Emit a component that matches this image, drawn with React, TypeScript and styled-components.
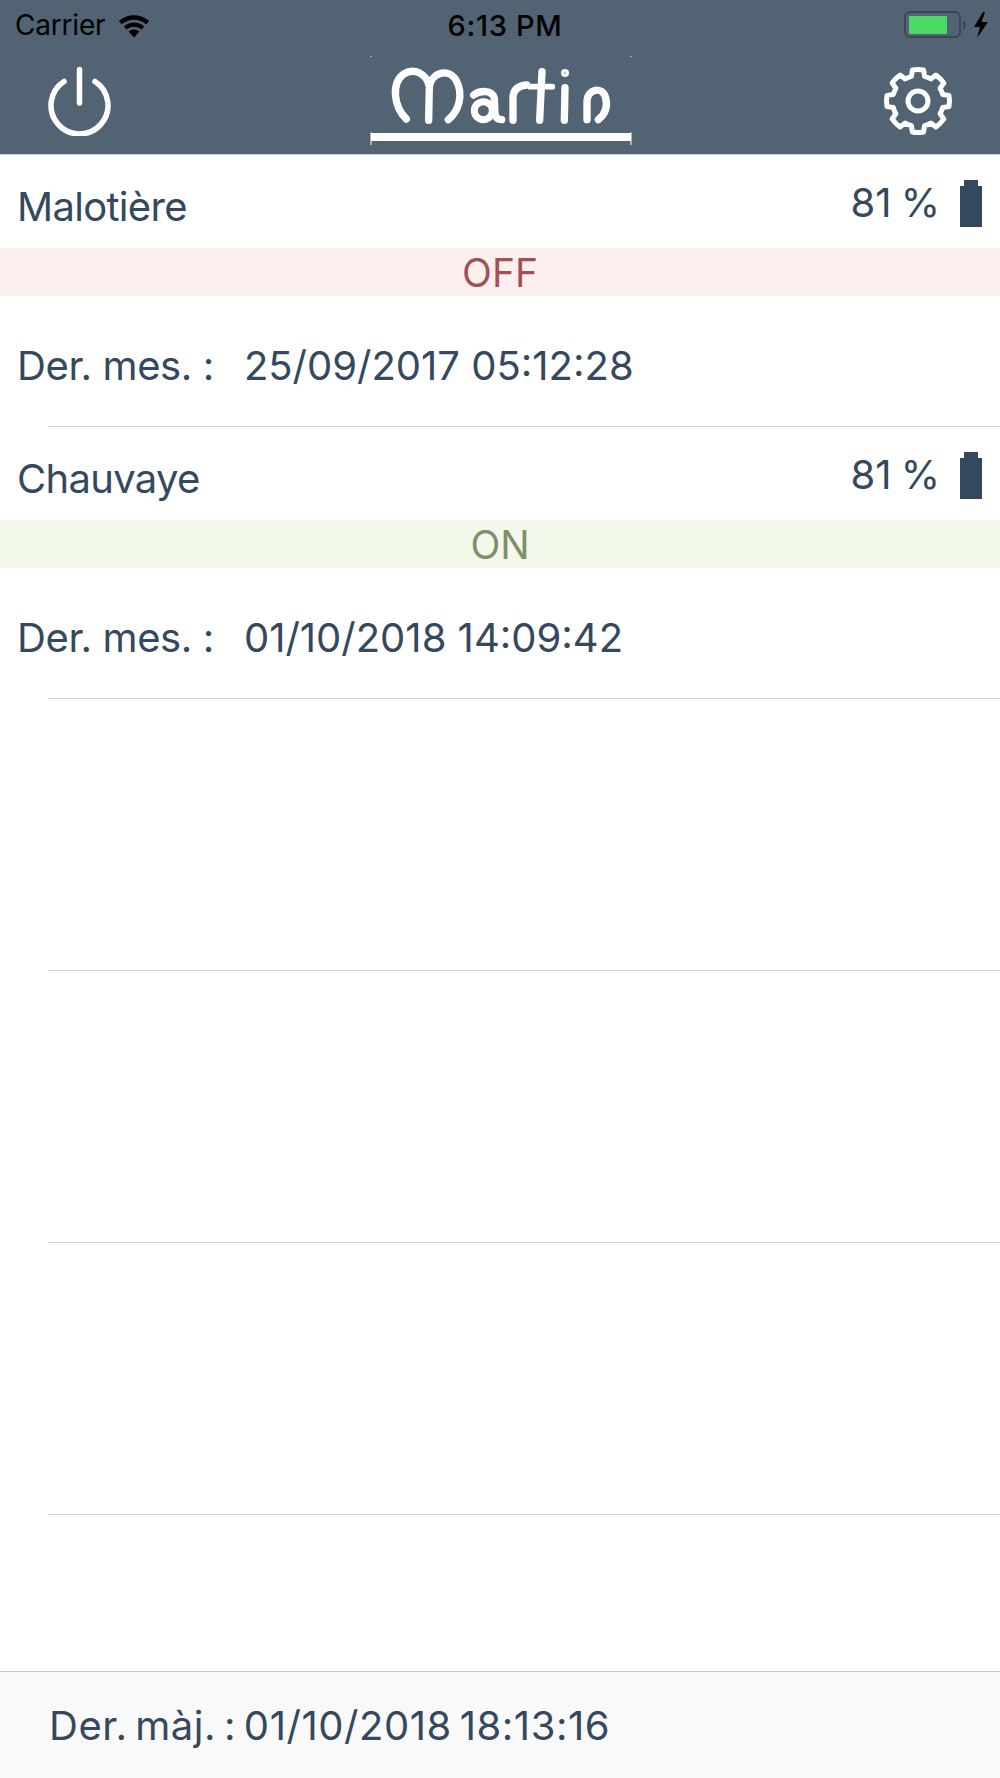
import React from "react";
import styled, { createGlobalStyle } from "styled-components";

const Global = createGlobalStyle`
  html, body { margin: 0; padding: 0; background: #fff; }
  * { box-sizing: border-box; }
  body { font-family: Inter, "Liberation Sans", sans-serif; }
`;

const Page = styled.div`
  width: 1000px;
  height: 1778px;
  display: flex;
  flex-direction: column;
  background: #fff;
  overflow: hidden;
  color: #34495e;
`;

const Header = styled.header`
  background: #526373;
  border-bottom: 1px solid #c9d0d6;
  height: 155px;
  display: flex;
  flex-direction: column;
`;

const StatusBar = styled.div`
  height: 48px;
  padding: 2px 11px 0 15px;
  display: grid;
  grid-template-columns: 1fr auto 1fr;
  align-items: center;
  color: #000;
  font-size: 28px;
`;

const StatusLeft = styled.div`
  display: flex;
  align-items: center;
  gap: 12px;
  letter-spacing: -0.2px;
`;

const StatusTime = styled.div`
  font-weight: 500;
  font-size: 29px;
  letter-spacing: 0.7px;
  margin-left: 6px;
`;

const StatusRight = styled.div`
  display: flex;
  justify-content: flex-end;
  align-items: center;
`;

const NavBar = styled.nav`
  flex: 1;
  display: grid;
  grid-template-columns: 1fr auto 1fr;
  align-items: center;
  padding: 0 46px 0 48px;
`;

const NavLeft = styled.div`
  display: flex;
  justify-content: flex-start;
`;

const NavRight = styled.div`
  display: flex;
  justify-content: flex-end;
`;

const List = styled.main`
  flex: 1;
  display: flex;
  flex-direction: column;
`;

const Row = styled.section`
  height: 272px;
  position: relative;
  display: flex;
  flex-direction: column;
  flex: none;
  &::after {
    content: "";
    position: absolute;
    left: 48px;
    right: 0;
    bottom: 0;
    height: 1px;
    background: #d6d6da;
  }
`;

const TitleLine = styled.div`
  height: 93px;
  padding: 10px 18px 0 17px;
  display: flex;
  justify-content: space-between;
  align-items: center;
  font-size: 40px;
`;

const Name = styled.span`
  letter-spacing: -0.7px;
`;

const BatteryWrap = styled.div`
  display: flex;
  align-items: center;
  gap: 20px;
  margin-top: -6px;
`;

const Pct = styled.span`
  position: relative;
  top: -1px;
  word-spacing: -2px;
`;

const Band = styled.div<{ $on: boolean }>`
  height: 48px;
  display: flex;
  justify-content: center;
  align-items: center;
  font-size: 39px;
  background: ${(p) => (p.$on ? "#f2f9eb" : "#feefef")};
  color: ${(p) => (p.$on ? "#7f8f6a" : "#a0525a")};
`;

const MeasureLine = styled.div`
  flex: 1;
  padding: 8px 17px 0;
  display: flex;
  align-items: center;
  gap: 30px;
  font-size: 40px;
`;

const Label = styled.span`
  letter-spacing: -0.4px;
`;

const DateText = styled.span`
  letter-spacing: 0;
`;

const Footer = styled.footer`
  height: 107px;
  flex: none;
  background: #f9f9f9;
  border-top: 1px solid #c8c8c8;
  padding: 0 0 0 49px;
  display: flex;
  align-items: center;
  font-size: 40px;
  letter-spacing: 0.55px;
  word-spacing: -4px;
`;

const Gear = () => {
  const pts: string[] = [];
  const n = 8;
  const cx = 36, cy = 36, ro = 31.5, ri = 25.5;
  for (let i = 0; i < n; i++) {
    const a = (i * 2 * Math.PI) / n - Math.PI / 2;
    const w = 0.2;
    const pol = (r: number, t: number) =>
      `${(cx + r * Math.cos(t)).toFixed(2)} ${(cy + r * Math.sin(t)).toFixed(2)}`;
    pts.push(`${i === 0 ? "M" : "L"}${pol(ri, a - w - 0.06)}`);
    pts.push(`L${pol(ro, a - w + 0.02)}`);
    pts.push(`A${ro} ${ro} 0 0 1 ${pol(ro, a + w - 0.02)}`);
    pts.push(`L${pol(ri, a + w + 0.06)}`);
    const next = a + (2 * Math.PI) / n;
    pts.push(`A${ri} ${ri} 0 0 1 ${pol(ri, next - w - 0.06)}`);
  }
  return (
    <svg width="72" height="72" viewBox="0 0 72 72" fill="none" stroke="#fff" strokeWidth="5" strokeLinejoin="round">
      <path d={pts.join(" ") + "Z"} />
      <circle cx={cx} cy={cy} r="10" />
    </svg>
  );
};

const Power = () => (
  <svg width="64" height="70" viewBox="0 0 64 70" fill="none" stroke="#fff" strokeWidth="5.5" strokeLinecap="round">
    <path d="M31.5 3.5V37" />
    <path d="M16 15.5A28.5 28.5 0 1 0 47 15.5" />
  </svg>
);

const Logo = () => (
  <svg width="280" height="100" viewBox="0 18 840 300" fill="none" stroke="#fff" strokeWidth="22" strokeLinecap="round" strokeLinejoin="round" role="img" aria-label="Martin">
    <path d="M136 222C98 185 90 115 128 87C160 68 197 85 205 125L203 226M205 125C212 82 262 68 285 105C310 150 292 200 262 224" />
    <path d="M338 150C355 136 394 133 400 160L402 205C404 218 410 224 422 224" />
    <circle cx="367" cy="197" r="27" strokeWidth="21" />
    <path d="M456 226L456 155C458 132 475 122 497 120" />
    <path d="M543 80L536 226" />
    <path d="M507 125H574" strokeWidth="17" />
    <path d="M612 128L610 226" />
    <circle cx="612" cy="84" r="5" strokeWidth="14" />
    <path d="M678 224L678 170C680 130 722 124 733 155C742 185 732 208 712 224" />
    <path d="M30 276H810" strokeWidth="24" strokeLinecap="butt" />
    <path d="M30 262V300M810 262V300" strokeWidth="3" strokeLinecap="butt" />
    <path d="M30 34v1M810 34v1" strokeWidth="4" stroke="#c9d0d6" />
  </svg>
);

const Wifi = () => (
  <svg width="34" height="25" viewBox="0 0 34 25" fill="#000">
    <path d="M17 24.5L11.6 18.6C14.7 15.8 19.3 15.8 22.4 18.6Z" />
    <path d="M9.6 16.4L6.9 13.4C12.6 8.3 21.4 8.3 27.1 13.4L24.4 16.4C20.2 12.7 13.8 12.7 9.6 16.4Z" />
    <path d="M4.9 11.2L1.9 8C10.5 .4 23.5 .4 32.1 8L29.1 11.2C22.2 5.2 11.8 5.2 4.9 11.2Z" />
  </svg>
);

const StatusBattery = () => (
  <svg width="85" height="28" viewBox="0 0 85 28">
    <rect x="1" y="1" width="55" height="25" rx="5" fill="none" stroke="#3c4753" strokeWidth="2" />
    <rect x="5" y="5" width="38" height="18" rx="1" fill="#4cd964" />
    <path d="M59 9C61 10 62 12 62 14C62 16 61 18 59 19Z" fill="#3c4753" />
    <path d="M79 1L70 16H76L73 27L84 11H77.5L81 1Z" fill="#000" />
  </svg>
);

const RowBattery = () => (
  <svg width="22" height="47" viewBox="0 0 22 47" fill="#34495e">
    <path d="M4 0H18V6H22V47H0V6H4Z" />
  </svg>
);

type Item = { name: string; on: boolean; date: string };

const items: Item[] = [
  { name: "Malotière", on: false, date: "25/09/2017 05:12:28" },
  { name: "Chauvaye", on: true, date: "01/10/2018 14:09:42" },
];

export default function App() {
  return (
    <Page>
      <Global />
      <Header>
        <StatusBar>
          <StatusLeft>
            <span>Carrier</span>
            <Wifi />
          </StatusLeft>
          <StatusTime>6:13 PM</StatusTime>
          <StatusRight>
            <StatusBattery />
          </StatusRight>
        </StatusBar>
        <NavBar>
          <NavLeft>
            <Power />
          </NavLeft>
          <Logo />
          <NavRight>
            <Gear />
          </NavRight>
        </NavBar>
      </Header>
      <List>
        {items.map((it) => (
          <Row key={it.name}>
            <TitleLine>
              <Name>{it.name}</Name>
              <BatteryWrap>
                <Pct>81 %</Pct>
                <RowBattery />
              </BatteryWrap>
            </TitleLine>
            <Band $on={it.on}>{it.on ? "ON" : "OFF"}</Band>
            <MeasureLine>
              <Label>Der. mes. :</Label>
              <DateText>{it.date}</DateText>
            </MeasureLine>
          </Row>
        ))}
        <Row />
        <Row />
        <Row />
      </List>
      <Footer>Der. màj. : 01/10/2018 18:13:16</Footer>
    </Page>
  );
}
